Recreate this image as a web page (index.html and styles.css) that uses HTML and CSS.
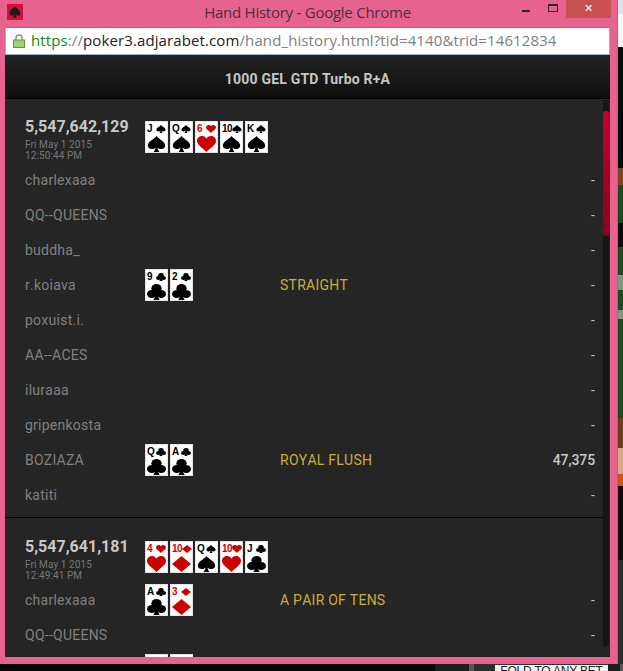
FILE: index.html
```html
<!DOCTYPE html>
<html lang="en">
<head>
<meta charset="utf-8">
<title>Hand History - Google Chrome</title>
<link rel="stylesheet" href="styles.css">
</head>
<body>
<svg class="defs" aria-hidden="true">
  <symbol id="spade" viewBox="0 0 24 24" preserveAspectRatio="none"><path d="M12 0C9 5 1 8 1 14.500c0 3 2.500 5 5 5 1.900 0 3.500-.8 4.700-2.300-.2 2.600-1 4.600-2.500 6.800h7.600c-1.500-2.200-2.300-4.200-2.500-6.800 1.200 1.500 2.800 2.300 4.700 2.300 2.500 0 5-2 5-5C23 8 15 5 12 0z"/></symbol>
  <symbol id="heart" viewBox="0 0 24 24" preserveAspectRatio="none"><path d="M12 24C8 18 0 14 0 7c0-4 3-7 6.500-7C9 0 11 1.500 12 4c1-2.500 3-4 5.500-4C21 0 24 3 24 7c0 7-8 11-12 17z"/></symbol>
  <symbol id="diamond" viewBox="0 0 24 24" preserveAspectRatio="none"><path d="M12 0 24 12 12 24 0 12z"/></symbol>
  <symbol id="club" viewBox="0 0 24 24" preserveAspectRatio="none"><circle cx="12" cy="6.500" r="6.500"/><circle cx="6" cy="15" r="6"/><circle cx="18" cy="15" r="6"/><path d="M10.800 10h2.400c0 6 .8 10 2.800 14H8c2-4 2.800-8 2.800-14z"/></symbol>
</svg>

<div class="screen">
  <div class="window">
    <div class="titlebar">
      <span class="favicon"><svg class="favicon-suit"><use href="#spade"/></svg></span>
      <span class="title">Hand History - Google Chrome</span>
      <div class="controls">
        <span class="ctl-min"></span>
        <span class="ctl-max"></span>
        <span class="ctl-close">✕</span>
      </div>
    </div>
    <div class="urlbar">
      <svg class="lock" viewBox="0 0 12 14"><path class="lock-shackle" d="M3 7V4a3 3 0 0 1 6 0v3"/><rect class="lock-body" x="0.500" y="6" width="11" height="7.500"/></svg>
      <span class="url"><span class="url-https">https</span><span class="url-sep">://</span><span class="url-host">poker3.adjarabet.com</span><span class="url-path">/hand_history.html?tid=4140&amp;trid=14612834</span></span>
    </div>
    <div class="page">
      <header class="tour">1000 GEL GTD Turbo R+A</header>
      <div class="main">
        <div class="hands">

          <section class="hand">
            <div class="hand-head">
              <div class="hand-info">
                <div class="hand-id">5,547,642,129</div>
                <div class="hand-date">Fri May 1 2015</div>
                <div class="hand-date">12:50:44 PM</div>
              </div>
              <div class="cards">
                <div class="card"><div class="card-top"><span class="rank">J</span><svg class="pip"><use href="#spade"/></svg></div><svg class="big"><use href="#spade"/></svg></div>
                <div class="card"><div class="card-top"><span class="rank">Q</span><svg class="pip"><use href="#spade"/></svg></div><svg class="big"><use href="#spade"/></svg></div>
                <div class="card red"><div class="card-top"><span class="rank">6</span><svg class="pip"><use href="#heart"/></svg></div><svg class="big"><use href="#heart"/></svg></div>
                <div class="card"><div class="card-top"><span class="rank">10</span><svg class="pip"><use href="#spade"/></svg></div><svg class="big"><use href="#spade"/></svg></div>
                <div class="card"><div class="card-top"><span class="rank">K</span><svg class="pip"><use href="#spade"/></svg></div><svg class="big"><use href="#spade"/></svg></div>
              </div>
            </div>
            <div class="row"><span class="name">charlexaaa</span><span class="cards seat"></span><span class="result"></span><span class="win">-</span></div>
            <div class="row"><span class="name">QQ--QUEENS</span><span class="cards seat"></span><span class="result"></span><span class="win">-</span></div>
            <div class="row"><span class="name">buddha_</span><span class="cards seat"></span><span class="result"></span><span class="win">-</span></div>
            <div class="row"><span class="name">r.koiava</span>
              <div class="cards seat">
                <div class="card"><div class="card-top"><span class="rank">9</span><svg class="pip"><use href="#club"/></svg></div><svg class="big"><use href="#club"/></svg></div>
                <div class="card"><div class="card-top"><span class="rank">2</span><svg class="pip"><use href="#club"/></svg></div><svg class="big"><use href="#club"/></svg></div>
              </div>
              <span class="result">STRAIGHT</span><span class="win">-</span></div>
            <div class="row"><span class="name">poxuist.i.</span><span class="cards seat"></span><span class="result"></span><span class="win">-</span></div>
            <div class="row"><span class="name">AA--ACES</span><span class="cards seat"></span><span class="result"></span><span class="win">-</span></div>
            <div class="row"><span class="name">iluraaa</span><span class="cards seat"></span><span class="result"></span><span class="win">-</span></div>
            <div class="row"><span class="name">gripenkosta</span><span class="cards seat"></span><span class="result"></span><span class="win">-</span></div>
            <div class="row"><span class="name">BOZIAZA</span>
              <div class="cards seat">
                <div class="card"><div class="card-top"><span class="rank">Q</span><svg class="pip"><use href="#club"/></svg></div><svg class="big"><use href="#club"/></svg></div>
                <div class="card"><div class="card-top"><span class="rank">A</span><svg class="pip"><use href="#club"/></svg></div><svg class="big"><use href="#club"/></svg></div>
              </div>
              <span class="result">ROYAL FLUSH</span><span class="win win-amount">47,375</span></div>
            <div class="row"><span class="name">katiti</span><span class="cards seat"></span><span class="result"></span><span class="win">-</span></div>
          </section>

          <section class="hand">
            <div class="hand-head">
              <div class="hand-info">
                <div class="hand-id">5,547,641,181</div>
                <div class="hand-date">Fri May 1 2015</div>
                <div class="hand-date">12:49:41 PM</div>
              </div>
              <div class="cards">
                <div class="card red"><div class="card-top"><span class="rank">4</span><svg class="pip"><use href="#heart"/></svg></div><svg class="big"><use href="#heart"/></svg></div>
                <div class="card red"><div class="card-top"><span class="rank">10</span><svg class="pip"><use href="#diamond"/></svg></div><svg class="big"><use href="#diamond"/></svg></div>
                <div class="card"><div class="card-top"><span class="rank">Q</span><svg class="pip"><use href="#spade"/></svg></div><svg class="big"><use href="#spade"/></svg></div>
                <div class="card red"><div class="card-top"><span class="rank">10</span><svg class="pip"><use href="#heart"/></svg></div><svg class="big"><use href="#heart"/></svg></div>
                <div class="card"><div class="card-top"><span class="rank">J</span><svg class="pip"><use href="#club"/></svg></div><svg class="big"><use href="#club"/></svg></div>
              </div>
            </div>
            <div class="row"><span class="name">charlexaaa</span>
              <div class="cards seat">
                <div class="card"><div class="card-top"><span class="rank">A</span><svg class="pip"><use href="#club"/></svg></div><svg class="big"><use href="#club"/></svg></div>
                <div class="card red"><div class="card-top"><span class="rank">3</span><svg class="pip"><use href="#diamond"/></svg></div><svg class="big"><use href="#diamond"/></svg></div>
              </div>
              <span class="result">A PAIR OF TENS</span><span class="win">-</span></div>
            <div class="row"><span class="name">QQ--QUEENS</span><span class="cards seat"></span><span class="result"></span><span class="win">-</span></div>
            <div class="row">
              <span class="name"></span>
              <div class="cards seat">
                <div class="card"></div>
                <div class="card"></div>
              </div>
            </div>
          </section>

        </div>
        <div class="track"><div class="thumb"></div></div>
      </div>
    </div>
  </div>
  <div class="desktop-right"></div>
</div>
<div class="desktop-bottom"><span class="fold">FOLD TO ANY BET</span></div>
</body>
</html>
```

FILE: styles.css
```css
* { box-sizing: border-box; }

html, body {
  margin: 0;
  padding: 0;
  height: 671px;
  overflow: hidden;
  background: #060808;
}

body { font-family: Roboto, "Liberation Sans", sans-serif; }

.defs { display: none; }

.screen { display: flex; height: 664px; }

.window {
  width: 618px;
  height: 664px;
  padding: 0 7px 7px 5px;
  display: flex;
  flex-direction: column;
  background: #e6638f;
  border-right: 1px solid #c9567f;
}

.desktop-right {
  flex: 1;
  background: linear-gradient(to bottom,
    #dfe3e8 0 14px, #f6f6f6 14px 47px, #050b0d 47px 168px, #7a4520 168px 185px,
    #1b4a1c 185px 223px, #0c0c0c 223px 247px, #1b4a1c 247px 275px, #7c9a7c 275px 290px,
    #1b4a1c 290px 310px, #7c9a7c 310px 319px, #1b4a1c 319px 418px, #6e3c1c 418px 448px,
    #d9a888 448px 474px, #c85a10 474px 486px, #100c0c 486px 560px, #2a3030 560px 664px);
}

.desktop-bottom {
  height: 7px;
  position: relative;
  overflow: hidden;
  background: linear-gradient(to right,
    #060808 0 435px, #1c1f1f 435px 469px, #555 469px 474px, #2c2f2f 474px 608px,
    #1c1f1f 608px 620px, #555 620px);
}

.fold {
  position: absolute;
  left: 495px;
  top: 1px;
  width: 113px;
  height: 14px;
  background: #f2f2f2;
  color: #222;
  font-size: 12px;
  font-family: "Liberation Sans", sans-serif;
  letter-spacing: -0.2px;
  text-align: center;
  line-height: 12px;
}

.titlebar {
  height: 27px;
  flex: none;
  display: flex;
  align-items: flex-start;
  position: relative;
}

.favicon {
  margin: 4px 0 0 2px;
  width: 16px;
  height: 16px;
  background: #d2103c;
  display: flex;
  align-items: center;
  justify-content: center;
}

.favicon-suit { width: 12px; height: 12px; fill: #1d1d1d; }

.title {
  position: absolute;
  left: 0;
  right: 0;
  top: 2px;
  text-align: center;
  color: #4d2e40;
  font: 15px/20px "Open Sans", sans-serif;
  letter-spacing: -0.25px;
}

.controls {
  position: absolute;
  right: -1px;
  top: 0;
  display: flex;
  align-items: flex-start;
}

.ctl-min, .ctl-max { display: block; }

.ctl-min {
  width: 8px;
  height: 2px;
  background: #2e2430;
  margin: 10px 18px 0 0;
}

.ctl-max {
  width: 10px;
  height: 8px;
  border: 1px solid #2e2430;
  border-top-width: 2px;
  margin: 4px 8px 0 0;
}

.ctl-close {
  width: 45px;
  height: 18px;
  background: #c75050;
  color: #fff;
  font: 11px/17px "DejaVu Sans", sans-serif;
  text-align: center;
}

.urlbar {
  height: 28px;
  flex: none;
  background: #fff;
  border: 1px solid #9fb0c4;
  border-top-color: #c9567f;
  display: flex;
  align-items: center;
  padding-left: 7px;
}

.lock { width: 12px; height: 14px; flex: none; margin: -1px 6px 0 0; }
.lock-shackle { fill: none; stroke: #8f8f8f; stroke-width: 1.600; }
.lock-body { fill: #9cd46e; stroke: #5f9a3d; stroke-width: 1; }

.url {
  font: 15px/20px "Open Sans", sans-serif;
  white-space: nowrap;
  letter-spacing: 0.11px;
  margin-top: -2px;
}
.url-https { color: #0b8a14; }
.url-sep { color: #7d7d7d; }
.url-host { color: #222; }
.url-path { color: #808080; }

.page {
  flex: 1;
  min-height: 0;
  display: flex;
  flex-direction: column;
  background: #252525;
}

.tour {
  height: 44px;
  flex: none;
  border-bottom: 1px solid #000;
  background: linear-gradient(to bottom, #232323, #0f0f0f);
  color: #c6c6c6;
  font-size: 14px;
  font-weight: 700;
  letter-spacing: 0.2px;
  line-height: 48px;
  text-align: center;
}

.main { flex: 1; min-height: 0; display: flex; }

.hands { flex: 1; min-width: 0; overflow: hidden; }

.hand {
  padding: 22px 8px 5px 20px;
  border-bottom: 1px solid #000;
  margin-bottom: 1px;
}

.hand-head { display: flex; height: 32px; margin-bottom: 9px; }

.hand-info { width: 120px; flex: none; }

.hand-id {
  color: #c8c8c8;
  font-size: 16px;
  font-weight: 700;
  line-height: 16px;
  margin-top: -2px;
  margin-bottom: 4px;
}

.hand-date {
  color: #777;
  font-size: 10px;
  line-height: 11px;
  letter-spacing: 0.1px;
  white-space: nowrap;
}

.cards { display: flex; gap: 2px; align-items: center; }

.card {
  width: 23px;
  height: 32px;
  flex: none;
  padding: 2px 2px 0;
  background: #fff;
  box-shadow: inset 0 0 0 1px #e4e4e4;
  color: #000;
  fill: #000;
  display: flex;
  flex-direction: column;
  align-items: center;
}

.card.red { color: #cc0000; fill: #cc0000; }

.card-top {
  width: 100%;
  height: 12px;
  margin-bottom: 1px;
  display: flex;
  justify-content: space-between;
  align-items: center;
}

.rank {
  font: 700 10px/12px "Liberation Sans", sans-serif;
  letter-spacing: -0.5px;
}

.pip { width: 10px; height: 8px; flex: none; }
.big { width: 19px; height: 16px; flex: none; }

.row {
  height: 35px;
  display: flex;
  align-items: center;
  font-size: 14px;
  font-kerning: none;
  letter-spacing: 0.25px;
}

.name { width: 120px; flex: none; color: #808080; white-space: nowrap; }

.seat { width: 135px; flex: none; }

.result { flex: 1; color: #c9ad3a; }

.win { color: #bdbdbd; text-align: right; }

.win-amount { font-weight: 500; color: #c8c8c8; letter-spacing: -0.1px; }

.track {
  width: 6px;
  flex: none;
  margin: 1px 1px 0 0;
  padding-top: 11px;
  background: #161616;
  border-radius: 0 0 3px 3px;
  box-sizing: content-box;
  height: 536px;
}

.thumb {
  height: 125px;
  border-radius: 3px;
  background: linear-gradient(to bottom, #c4002e, #8c0022);
}
```
